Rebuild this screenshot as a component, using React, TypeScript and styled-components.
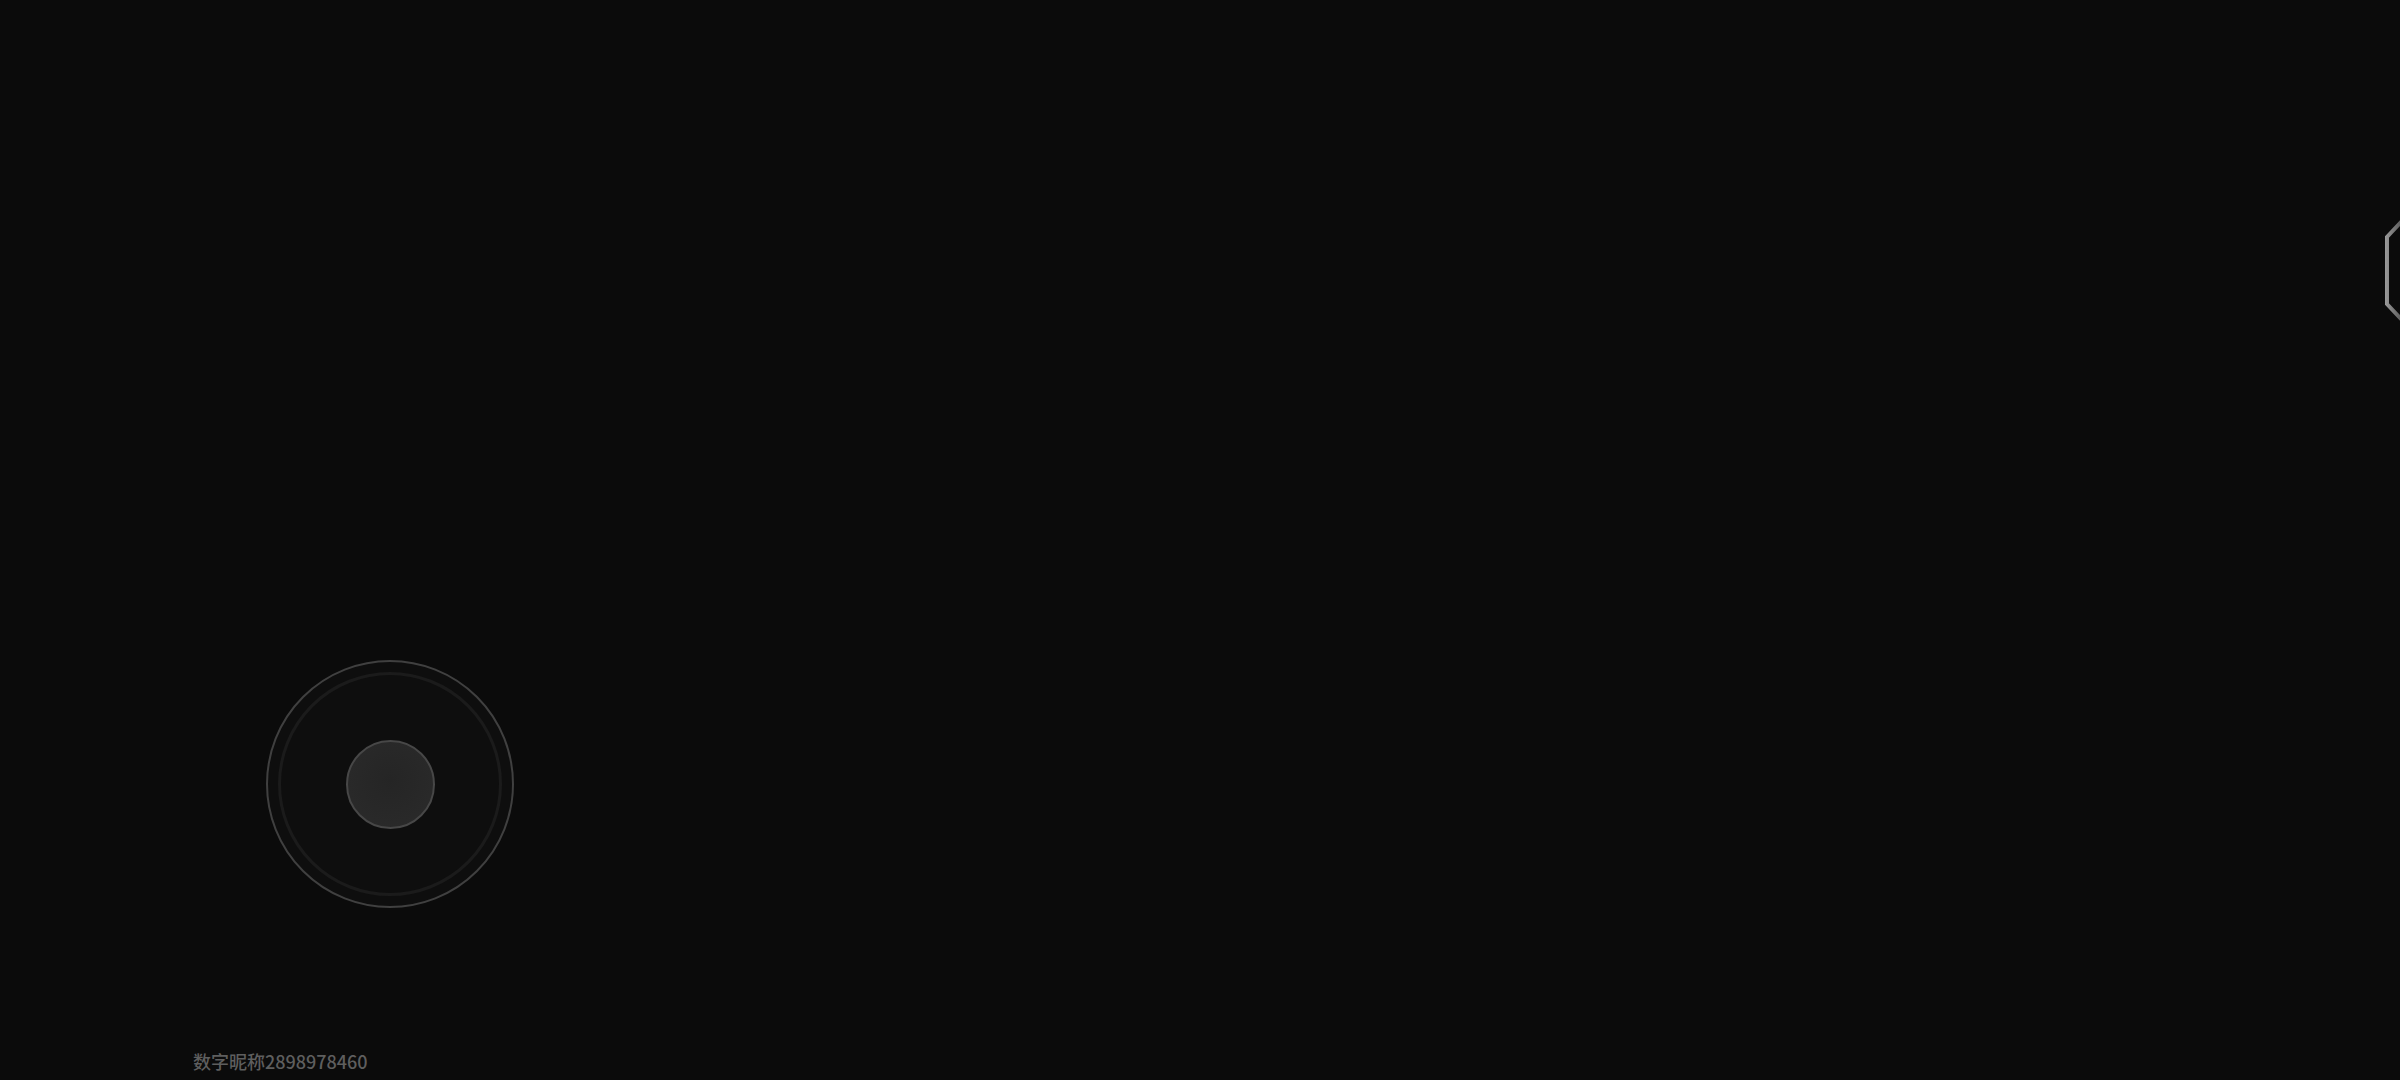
import React from "react";
import styled, { createGlobalStyle } from "styled-components";

const GlobalStyle = createGlobalStyle`
  html, body {
    margin: 0;
    padding: 0;
    background: #0b0b0b;
    overflow: hidden;
  }
  * { box-sizing: border-box; }
`;

const Screen = styled.div`
  position: relative;
  width: 2400px;
  height: 1080px;
  background: #0b0b0b;
  overflow: hidden;
  font-family: "Noto Sans CJK SC", "Noto Sans", sans-serif;
  display: flex;
  flex-direction: column;
  justify-content: flex-end;
  align-items: flex-start;
  padding: 0 0 7px 193px;
`;

const ControlColumn = styled.div`
  display: flex;
  flex-direction: column;
  align-items: flex-start;
  gap: 141px;
`;

const Joystick = styled.div`
  margin-left: 73px;
  width: 248px;
  height: 248px;
  border-radius: 50%;
  border: 2px solid #404040;
  background: #0e0e0e;
  display: flex;
  align-items: center;
  justify-content: center;
`;

const InnerRing = styled.div`
  width: 224px;
  height: 224px;
  border-radius: 50%;
  border: 3px solid #1b1b1b;
  display: flex;
  align-items: center;
  justify-content: center;
`;

const Knob = styled.div`
  width: 89px;
  height: 89px;
  border-radius: 50%;
  border: 2px solid #474747;
  background: radial-gradient(circle at 50% 45%, #252525 0%, #2b2b2b 100%);
`;

const Caption = styled.div`
  font-size: 18px;
  line-height: 24px;
  font-weight: 500;
  color: #5e5e5e;
  white-space: nowrap;
`;

const EdgeButton = styled.svg`
  position: absolute;
  right: 0;
  top: 210px;
  width: 30px;
  height: 120px;
`;

export default function App() {
  return (
    <>
      <GlobalStyle />
      <Screen>
        <EdgeButton viewBox="2370 210 30 120">
          <defs>
            <linearGradient id="edgeGrad" gradientUnits="userSpaceOnUse" x1="2385" y1="0" x2="2402" y2="0">
              <stop offset="0" stopColor="#9a9a9a" />
              <stop offset="1" stopColor="#5a5a5a" />
            </linearGradient>
          </defs>
          <path
            d="M 2403 220 L 2387 237 L 2387 304 L 2403 321"
            fill="none"
            stroke="url(#edgeGrad)"
            strokeWidth="4"
            strokeLinejoin="miter"
          />
        </EdgeButton>
        <ControlColumn>
          <Joystick>
            <InnerRing>
              <Knob />
            </InnerRing>
          </Joystick>
          <Caption>数字昵称2898978460</Caption>
        </ControlColumn>
      </Screen>
    </>
  );
}
